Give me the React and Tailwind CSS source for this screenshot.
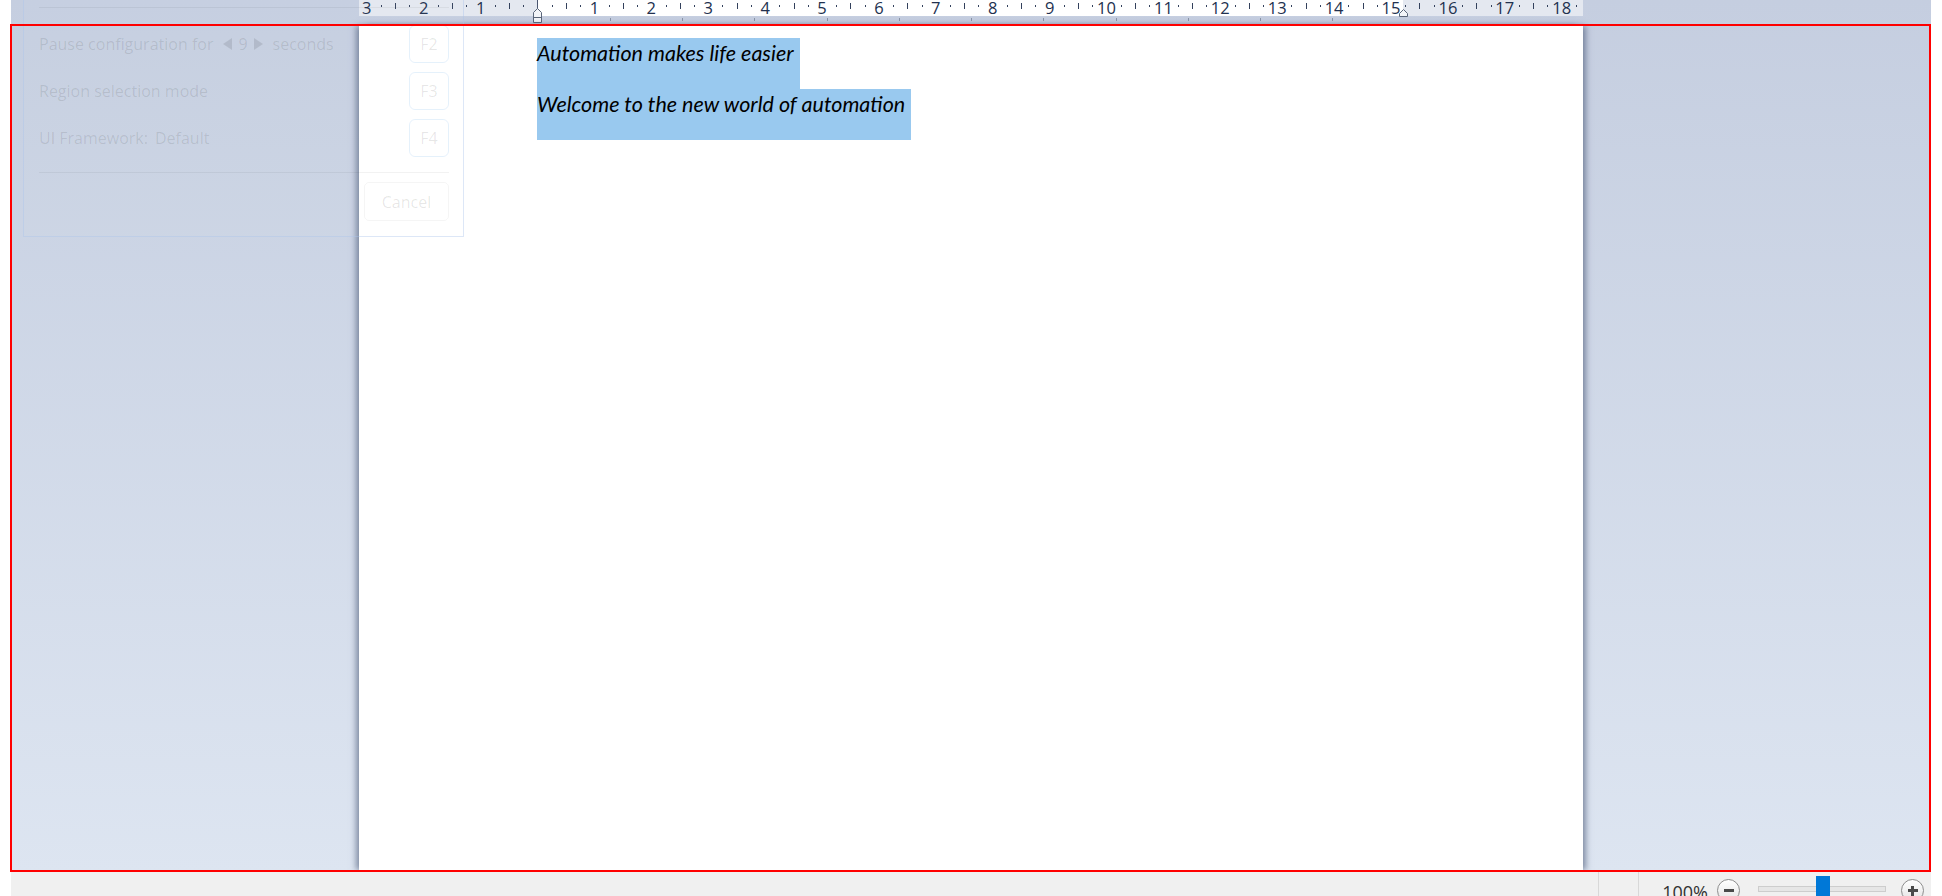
import React from "react";

const CM = 56.9;
const ORIGIN = 178.5;
const RULER_W = 1224;

function Ruler() {
  const items = [];
  for (let q = -13; q <= 76; q++) {
    const x = ORIGIN + (q * CM) / 4;
    if (x < 2 || x > RULER_W - 2) continue;
    const m = ((q % 4) + 4) % 4;
    if (m === 0) {
      const n = Math.abs(q / 4);
      if (n === 0) continue;
      items.push(
        <text
          key={q}
          x={x}
          y={13.5}
          textAnchor="middle"
          fontFamily="'Open Sans', sans-serif"
          fontSize="16.5"
          fill="#22314f"
        >
          {n}
        </text>
      );
    } else if (m === 2) {
      items.push(<rect key={q} x={Math.round(x)} y={3} width={1} height={6} fill="#33415c" />);
    } else {
      items.push(<rect key={q} x={Math.round(x)} y={5} width={1} height={2} fill="#33415c" />);
    }
  }
  const tabs = [];
  for (let k = 1; k <= 11; k++) {
    const x = Math.round(ORIGIN + k * 72.26);
    tabs.push(<rect key={k} x={x} y={18} width={1} height={3} fill="#8a95a8" />);
  }
  return (
    <svg width={RULER_W} height={24} className="block shrink-0">
      <rect x={0} y={0} width={ORIGIN} height={16} fill="#e4e8f0" />
      <rect x={ORIGIN} y={0} width={1044 - ORIGIN} height={16} fill="#ffffff" />
      <rect x={1044} y={0} width={RULER_W - 1044} height={16} fill="#e4e8f0" />
      {items}
      {tabs}
      <rect x={178} y={0} width={1} height={9} fill="#4a5670" />
      <polygon
        points="178.5,8.5 182.5,12.5 182.5,22.5 174.5,22.5 174.5,12.5"
        fill="#f3f5f9"
        stroke="#5b667a"
        strokeWidth="1"
      />
      <line x1="174.5" y1="17.5" x2="182.5" y2="17.5" stroke="#5b667a" strokeWidth="1" />
      <polygon
        points="1044.5,9.5 1048.5,13.5 1048.5,16.5 1040.5,16.5 1040.5,13.5"
        fill="#f3f5f9"
        stroke="#5b667a"
        strokeWidth="1"
      />
    </svg>
  );
}

function Para({ children }) {
  return (
    <div className="bg-[#99c9ef] pr-[6px] pb-[21px] text-[21.5px] leading-[30px] italic text-black font-['Lato',sans-serif]">
      {children}
    </div>
  );
}

function FKey({ label }) {
  return (
    <div className="w-[40px] h-[38px] rounded-[6px] border border-[rgba(0,120,215,0.1)] flex items-center justify-center">
      {label}
    </div>
  );
}

function Tri({ dir }) {
  return (
    <svg width="9" height="12" viewBox="0 0 9 12" className="block">
      {dir === "l" ? (
        <polygon points="9,0 9,12 0,6" fill="rgba(0,0,0,0.1)" />
      ) : (
        <polygon points="0,0 0,12 9,6" fill="rgba(0,0,0,0.1)" />
      )}
    </svg>
  );
}

function Dialog() {
  return (
    <div className="absolute left-[23px] top-[-20px] w-[441px] h-[257px] border border-[rgba(170,195,235,0.4)] bg-[rgba(255,255,255,0.03)] pl-[15px] pr-[14px] flex flex-col text-[16px] text-[rgba(0,0,0,0.1)] font-['Open_Sans',sans-serif]">
      <div className="h-[26px] shrink-0" />
      <div className="border-t border-[rgba(0,0,0,0.05)]" />
      <div className="mt-[17px] flex flex-col gap-[9px]">
        <div className="flex items-center justify-between">
          <div className="flex items-center">
            <span>Pause configuration for</span>
            <span className="ml-[10px]">
              <Tri dir="l" />
            </span>
            <span className="ml-[6px]">9</span>
            <span className="ml-[6px]">
              <Tri dir="r" />
            </span>
            <span className="ml-[10px]">seconds</span>
          </div>
          <FKey label="F2" />
        </div>
        <div className="flex items-center justify-between">
          <span>Region selection mode</span>
          <FKey label="F3" />
        </div>
        <div className="flex items-center justify-between">
          <div className="flex items-center gap-[7px]">
            <span>UI Framework:</span>
            <span>Default</span>
          </div>
          <FKey label="F4" />
        </div>
      </div>
      <div className="mt-[15px] border-t border-[rgba(0,0,0,0.05)]" />
      <div className="mt-[9px] self-end w-[85px] h-[39px] rounded-[5px] border border-[rgba(0,0,0,0.04)] flex items-center justify-center">
        Cancel
      </div>
    </div>
  );
}

function ZoomButton({ plus }) {
  return (
    <div className="relative w-[23px] h-[23px] rounded-full border border-[#8e8e8e] bg-linear-to-b from-[#ffffff] to-[#e4e4e4] flex items-center justify-center shrink-0">
      <div className="w-[10px] h-[3px] bg-[#4a4a4a]" />
      {plus && <div className="absolute w-[3px] h-[10px] bg-[#4a4a4a]" />}
    </div>
  );
}

function StatusBar() {
  return (
    <div className="h-[24px] shrink-0 bg-[#f0f0f0] flex items-start justify-end pr-[7px] text-[#333333] font-['Open_Sans',sans-serif]">
      <div className="w-px h-[30px] bg-[#d8d8d8]" />
      <div className="w-px h-[30px] bg-[#d8d8d8] ml-[39px]" />
      <span className="ml-[23px] mt-[11px] text-[18px] leading-none">100%</span>
      <div className="ml-[9px] mt-[7px]">
        <ZoomButton />
      </div>
      <div className="relative ml-[18px] mt-[14px] w-[128px] h-[6px] border border-[#cdcdcd] bg-[#e6e6e6]">
        <div className="absolute left-[57px] top-[-11px] w-[14px] h-[26px] bg-[#0078d7]" />
      </div>
      <div className="ml-[15px] mt-[7px]">
        <ZoomButton plus />
      </div>
    </div>
  );
}

export default function App() {
  return (
    <div className="relative w-[1942px] h-[896px] overflow-hidden bg-white font-['Open_Sans',sans-serif]">
      <div className="ml-[11px] w-[1920px] h-full flex flex-col">
        <div className="h-[872px] shrink-0 bg-linear-to-b from-[#c5cee0] to-[#dde5f1] flex flex-col">
          <div className="ml-[348px] w-[1224px] flex-1 flex flex-col">
            <Ruler />
            <div className="flex-1 bg-white shadow-[-5px_0_6px_-2px_rgba(70,85,115,0.6),5px_0_6px_-2px_rgba(70,85,115,0.6)] pt-[14px] pl-[178px] flex flex-col items-start">
              <Para>Automation makes life easier</Para>
              <Para>Welcome to the new world of automation</Para>
            </div>
          </div>
        </div>
        <StatusBar />
      </div>
      <Dialog />
      <div className="absolute left-[10px] top-[24px] w-[1921px] h-[848px] border-2 border-[#ff0000] pointer-events-none" />
    </div>
  );
}
